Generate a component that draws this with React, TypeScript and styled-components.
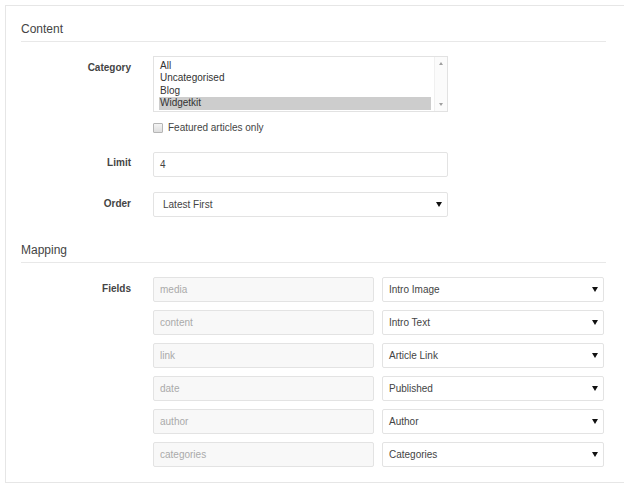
import React from 'react';
import styled, { createGlobalStyle } from 'styled-components';

const GlobalStyle = createGlobalStyle`
  html, body {
    margin: 0;
    padding: 0;
    background: #ffffff;
    overflow: hidden;
  }
  body {
    font-family: 'Liberation Sans', Arial, sans-serif;
    color: #444;
  }
`;

const Panel = styled.div`
  margin: 5px 0 0 5px;
  width: 603px;
  height: 476px;
  border: 1px solid #e6e6e6;
  border-right: none;
  box-sizing: content-box;
  padding: 0 0 0 15px;
`;

const Inner = styled.div`
  width: 585px;
`;

const Heading = styled.h3<{ $top: number }>`
  margin: ${({ $top }) => $top}px 0 0;
  padding: 0 0 4px;
  font-size: 12px;
  font-weight: normal;
  line-height: 15px;
  color: #444;
  border-bottom: 1px solid #e8e8e8;
`;

const Rows = styled.div<{ $top: number }>`
  display: flex;
  flex-direction: column;
  gap: 15px;
  padding-top: ${({ $top }) => $top}px;
`;

const Row = styled.div`
  display: grid;
  grid-template-columns: 110px 1fr;
  column-gap: 22px;
  align-items: start;
`;

const Label = styled.label<{ $pad: number }>`
  text-align: right;
  font-size: 10px;
  font-weight: bold;
  color: #444;
  padding-top: ${({ $pad }) => $pad}px;
  line-height: 12px;
`;

const Control = styled.div`
  display: flex;
  flex-direction: column;
  gap: 9px;
`;

const ListBox = styled.div`
  width: 295px;
  height: 56px;
  box-sizing: border-box;
  border: 1px solid #e2e2e2;
  display: flex;
`;

const Options = styled.div`
  flex: 1;
  padding: 3px 3px 0 5px;
`;

const Option = styled.div<{ $selected?: boolean }>`
  font-size: 10px;
  line-height: 12.4px;
  height: 12.4px;
  padding-left: 1px;
  color: #333;
  background: ${({ $selected }) => ($selected ? '#cdcdcd' : 'transparent')};
`;

const ScrollBar = styled.div`
  width: 12px;
  display: flex;
  flex-direction: column;
  justify-content: space-between;
  align-items: center;
  padding: 5px 0;
  border-left: 1px solid #f0f0f0;
  background: #fbfbfb;
`;

const Check = styled.div`
  display: flex;
  align-items: center;
  gap: 5px;
  font-size: 10px;
  color: #444;
  height: 13px;
  margin-bottom: 3px;
`;

const Box = styled.span`
  width: 8px;
  height: 8px;
  border: 1px solid #b5b5b5;
  background: linear-gradient(#f4f4f4, #dedede);
  border-radius: 1px;
`;

const Input = styled.div<{ $muted?: boolean; $width?: number }>`
  width: ${({ $width }) => $width ?? 295}px;
  height: 25px;
  box-sizing: border-box;
  border: 1px solid #e3e3e3;
  border-radius: 2px;
  background: ${({ $muted }) => ($muted ? '#f8f8f8' : '#fff')};
  color: ${({ $muted }) => ($muted ? '#aaa' : '#444')};
  font-size: 10px;
  display: flex;
  align-items: center;
  padding-left: 6px;
`;

const Select = styled.div<{ $width?: number; $pad?: number }>`
  width: ${({ $width }) => $width ?? 295}px;
  height: 25px;
  box-sizing: border-box;
  border: 1px solid #e3e3e3;
  border-radius: 2px;
  background: #fff;
  color: #444;
  font-size: 10px;
  display: flex;
  align-items: center;
  justify-content: space-between;
  padding: 0 5px 0 ${({ $pad }) => $pad ?? 9}px;
`;

const Arrow = styled.span`
  width: 0;
  height: 0;
  border-left: 3px solid transparent;
  border-right: 3px solid transparent;
  border-top: 5px solid #111;
`;

const Tri = styled.span<{ $up?: boolean }>`
  width: 0;
  height: 0;
  border-left: 2px solid transparent;
  border-right: 2px solid transparent;
  ${({ $up }) => ($up ? 'border-bottom: 3px solid #a0a0a0;' : 'border-top: 3px solid #a0a0a0;')}
`;

const FieldGrid = styled.div`
  display: grid;
  grid-template-columns: 221px 222px;
  column-gap: 8px;
  row-gap: 8px;
`;

const mapping = [
  ['media', 'Intro Image'],
  ['content', 'Intro Text'],
  ['link', 'Article Link'],
  ['date', 'Published'],
  ['author', 'Author'],
  ['categories', 'Categories'],
];

export default function App() {
  return (
    <>
      <GlobalStyle />
      <Panel>
        <Inner>
          <Heading $top={16}>Content</Heading>
          <Rows $top={14}>
            <Row>
              <Label $pad={6}>Category</Label>
              <Control>
                <ListBox>
                  <Options>
                    <Option>All</Option>
                    <Option>Uncategorised</Option>
                    <Option>Blog</Option>
                    <Option $selected>Widgetkit</Option>
                  </Options>
                  <ScrollBar>
                    <Tri $up />
                    <Tri />
                  </ScrollBar>
                </ListBox>
                <Check>
                  <Box />
                  Featured articles only
                </Check>
              </Control>
            </Row>
            <Row>
              <Label $pad={5}>Limit</Label>
              <Input>4</Input>
            </Row>
            <Row>
              <Label $pad={6}>Order</Label>
              <Select>
                Latest First
                <Arrow />
              </Select>
            </Row>
          </Rows>
          <Heading $top={26}>Mapping</Heading>
          <Rows $top={14}>
            <Row>
              <Label $pad={6}>Fields</Label>
              <FieldGrid>
                {mapping.map(([field, value]) => (
                  <React.Fragment key={field}>
                    <Input $muted $width={221}>{field}</Input>
                    <Select $width={222} $pad={6}>
                      {value}
                      <Arrow />
                    </Select>
                  </React.Fragment>
                ))}
              </FieldGrid>
            </Row>
          </Rows>
        </Inner>
      </Panel>
    </>
  );
}
